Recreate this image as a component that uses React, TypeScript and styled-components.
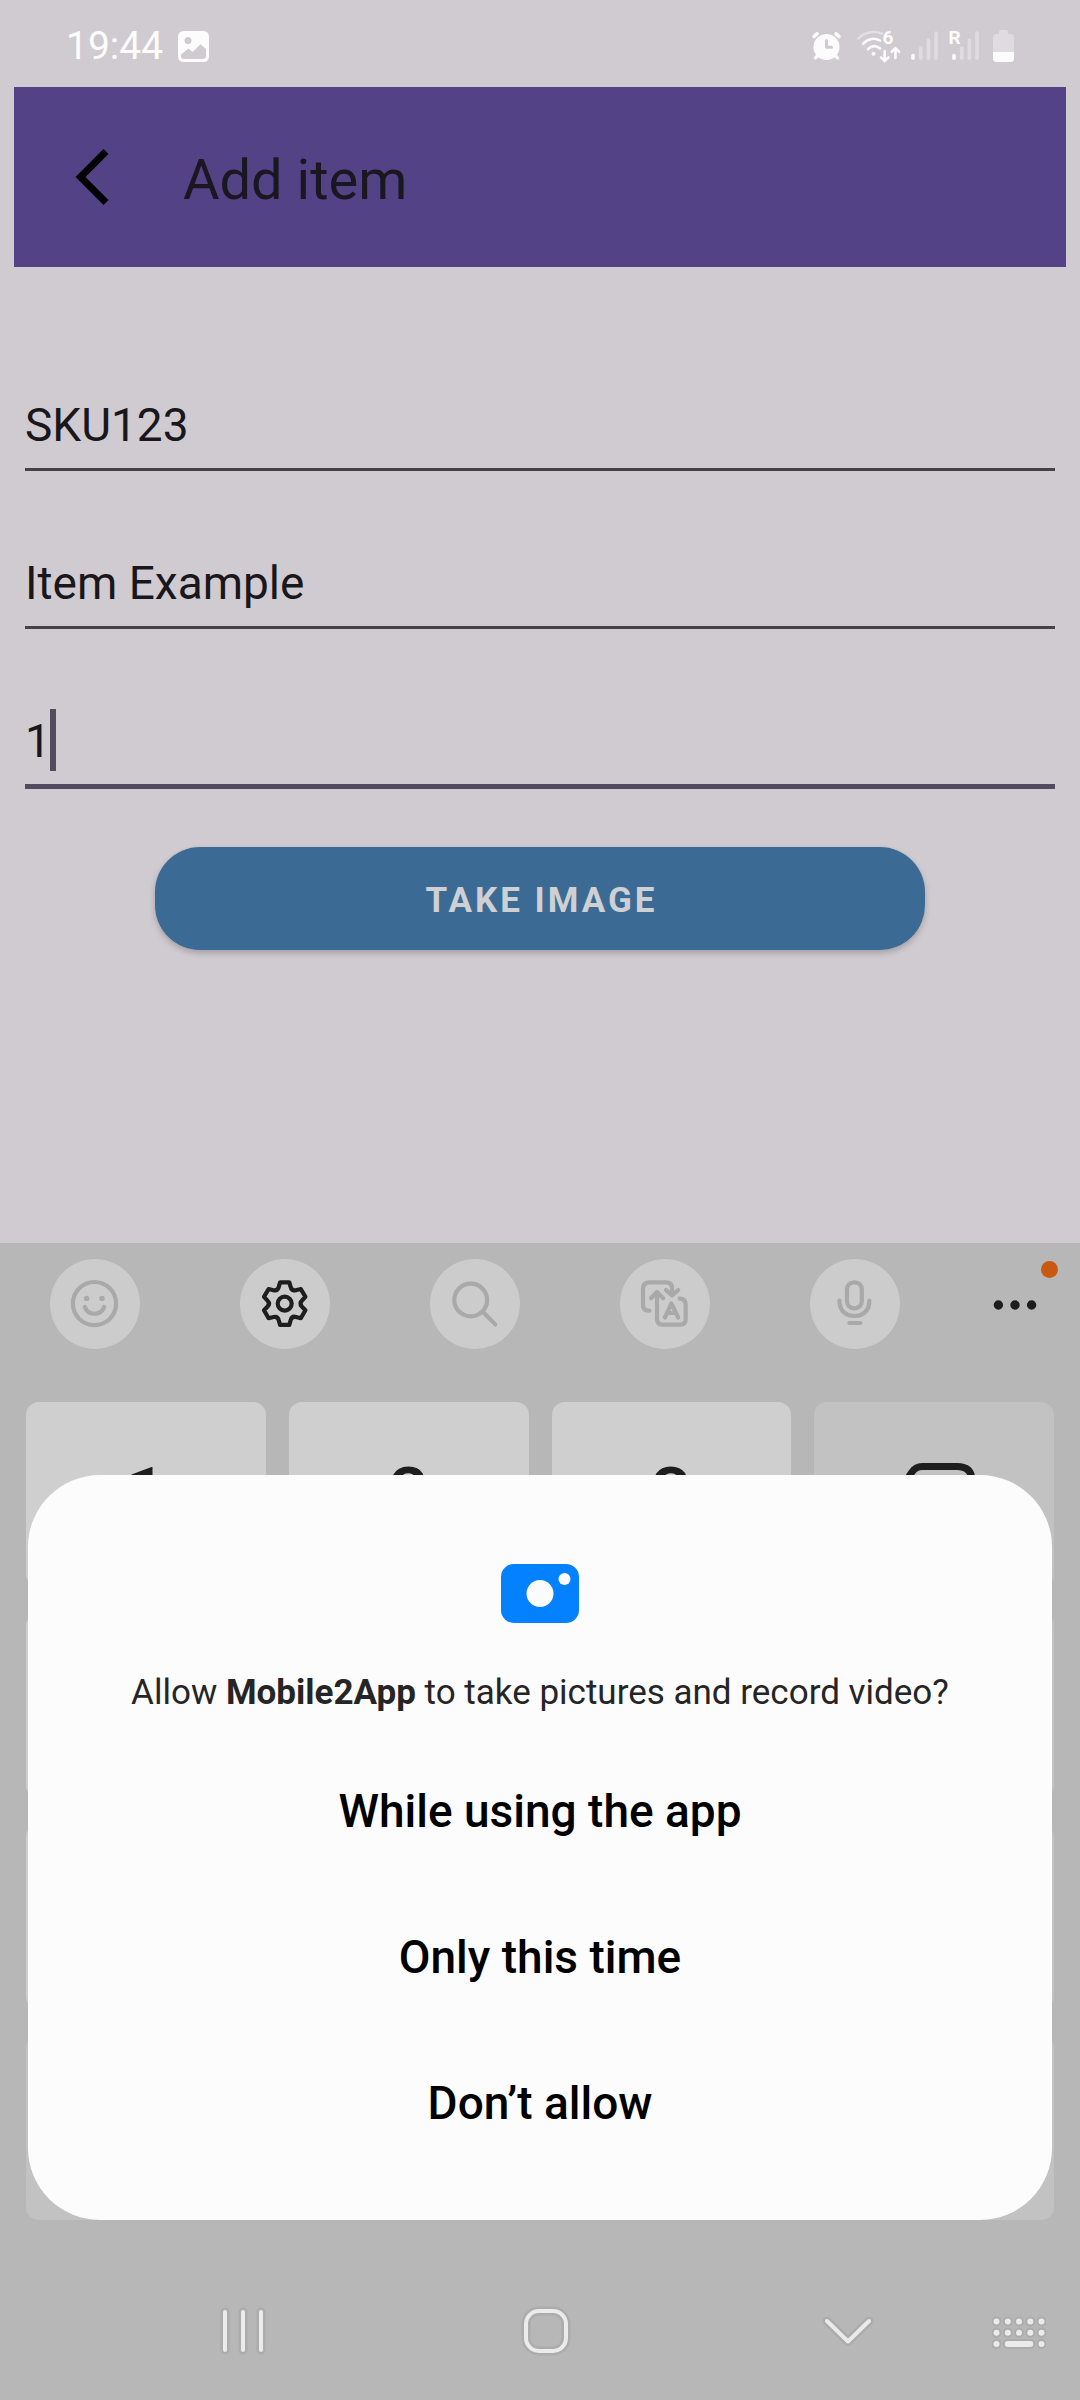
import React from "react";
import styled, { createGlobalStyle, css } from "styled-components";

const GlobalStyle = createGlobalStyle`
  *, *::before, *::after { box-sizing: border-box; }
  body { margin: 0; background: #d0cbd1; font-family: Roboto, "Liberation Sans", sans-serif; }
  button, input { font: inherit; color: inherit; border: 0; padding: 0; margin: 0; background: none; outline: none; }
  svg { display: block; flex: none; }
`;

const Screen = styled.div`
  position: relative;
  display: flex;
  flex-direction: column;
  min-height: 100vh;
  background: #d0cbd1;
`;

/* ---------- status bar ---------- */

const StatusBar = styled.div`
  display: flex;
  align-items: center;
  justify-content: space-between;
  height: 87px;
  padding: 5px 65px 0 66px;
  color: #fcfcfc;
`;

const StatusGroup = styled.div<{ $gap: number }>`
  display: flex;
  align-items: center;
  gap: ${(p) => p.$gap}px;
`;

const Clock = styled.time`
  font-size: 39px;
  line-height: 48px;
`;

const StatusLetter = styled.text`
  font-family: Roboto, sans-serif;
  font-weight: 700;
  font-size: 19px;
  fill: #fcfcfc;
`;

/* ---------- app page ---------- */

const AppBar = styled.header`
  display: flex;
  align-items: center;
  gap: 55px;
  height: 180px;
  margin: 0 14px;
  padding-left: 42px;
  background: #534285;
`;

const BackButton = styled.button`
  display: grid;
  place-items: center;
  width: 72px;
  height: 72px;
`;

const Title = styled.h1`
  margin: 0;
  padding-top: 5px;
  font-size: 56px;
  line-height: 68px;
  font-weight: 400;
  color: #1a1720;
`;

const Form = styled.form`
  display: flex;
  flex: 1;
  flex-direction: column;
  padding: 46px 25px 0;
`;

const Field = styled.div<{ $active?: boolean }>`
  display: flex;
  margin-top: 80px;
  padding-bottom: 13px;
  border-bottom: ${(p) => (p.$active ? "5px solid #514c5f" : "3px solid #454148")};
`;

const TextInput = styled.input<{ $fit?: boolean }>`
  height: 62px;
  padding-top: 2px;
  font-size: 46px;
  line-height: 60px;
  color: #19171c;
  ${(p) =>
    p.$fit
      ? css`
          width: 25px;
          caret-color: transparent;
        `
      : css`
          flex: 1;
          min-width: 0;
        `}
`;

const Caret = styled.span`
  width: 6px;
  height: 62px;
  background: #514c5f;
`;

const PrimaryButton = styled.button`
  align-self: center;
  width: 100%;
  max-width: 770px;
  height: 103px;
  margin-top: 58px;
  padding: 3px 0 0 3px;
  border-radius: 45px;
  background: #3b6b94;
  box-shadow: 0 3px 6px rgba(0, 0, 0, 0.22);
  color: #cfd0d3;
  font-size: 35px;
  font-weight: 700;
  letter-spacing: 3px;
  text-transform: uppercase;
`;

/* ---------- keyboard ---------- */

const Keyboard = styled.section`
  padding: 16px 0 42px;
  background: #b7b7b7;
`;

const Toolbar = styled.div`
  display: flex;
  gap: 70px;
  padding: 0 20px 0 50px;
`;

const Tools = styled.div`
  display: flex;
  flex: 1;
  justify-content: space-between;
`;

const ToolButton = styled.button<{ $on?: boolean }>`
  width: 90px;
  height: 90px;
  border-radius: 50%;
  background: #cccccc;
  color: ${(p) => (p.$on ? "#1e1e1e" : "#a9a9a9")};
`;

const MoreButton = styled.button`
  position: relative;
  width: 90px;
  height: 90px;
  color: #1e1e1e;
`;

const Badge = styled.span`
  position: absolute;
  top: 2px;
  right: 2px;
  width: 17px;
  height: 17px;
  border-radius: 50%;
  background: #c9590f;
`;

const Keys = styled.div`
  display: grid;
  grid-template-columns: repeat(4, 1fr);
  grid-auto-rows: 185px;
  gap: 26px 23px;
  padding: 53px 26px 0;
`;

const Key = styled.button<{ $dark?: boolean }>`
  display: grid;
  place-items: center;
  border-radius: 13px;
  background: ${(p) => (p.$dark ? "#c2c2c2" : "#cfcfcf")};
  color: #1e1e1e;
  font-size: 72px;
  font-weight: 500;
  line-height: 86px;
`;

const NavBar = styled.nav`
  display: flex;
  align-items: center;
  gap: 117px;
  height: 138px;
  padding: 0 34px 0 216px;
  background: #b7b7b7;
`;

const NavGroup = styled.div`
  display: flex;
  flex: 1;
  justify-content: space-between;
`;

const NavButton = styled.button`
  width: 54px;
  height: 54px;
`;

/* ---------- permission sheet ---------- */

const Sheet = styled.div`
  position: absolute;
  right: 28px;
  bottom: 180px;
  left: 28px;
  display: flex;
  flex-direction: column;
  align-items: center;
  padding: 89px 40px 44px;
  border-radius: 72px;
  background: #fcfcfc;
`;

const Message = styled.p`
  margin: 49px 0 24px;
  font-size: 35px;
  line-height: 42px;
  text-align: center;
  color: #252525;
`;

const Option = styled.button`
  width: 100%;
  height: 146px;
  font-size: 46px;
  line-height: 56px;
  font-weight: 500;
  color: #000000;
`;

/* ---------- drawings ---------- */

const PictureIcon = () => (
  <svg width="31" height="31" viewBox="0 0 31 31">
    <path
      fillRule="evenodd"
      fill="#fcfcfc"
      d="M6 0H25Q31 0 31 6V25Q31 31 25 31H6Q0 31 0 25V6Q0 0 6 0ZM10 6a3.6 3.6 0 1 0 .01 0ZM3 23.5V25Q3 28 6 28H25Q28 28 28 25V18L22.5 13.2L14.5 21L10.5 17.5Z"
    />
  </svg>
);

const AlarmIcon = () => (
  <svg width="36" height="33" viewBox="811 30 36 33" fill="none" stroke="#fcfcfc" strokeLinecap="round">
    <path d="M814 36.5L817 33.8M839 36.5L836 33.8" strokeWidth="3.6" />
    <path d="M818 55L815.5 58M835 55L837.5 58" strokeWidth="3.4" />
    <circle cx="826.5" cy="47" r="13" fill="#fcfcfc" stroke="none" />
    <path d="M826.5 40.5V47.3H831.5" stroke="#d0cbd1" strokeWidth="3" strokeLinejoin="round" />
  </svg>
);

const WifiIcon = () => (
  <svg width="44" height="45" viewBox="857 24 44 45" fill="none" stroke="#fcfcfc" strokeWidth="2.6" strokeLinecap="round">
    <path d="M858.5 38.5C864 32 874 30.5 882 33.5" stroke="#e3dfe4" />
    <path d="M863 43.8C868 38.2 875 37.6 880 40.5" />
    <path d="M868 49.2C871.5 45.2 876.5 45.2 880 48.5" />
    <circle cx="873.5" cy="53.8" r="2" fill="#fcfcfc" stroke="none" />
    <path d="M884.7 51V60.5M881 57.4L884.7 61L888.4 57.4M895.4 58V48.5M891.7 51.8L895.4 48.2L899.1 51.8" />
    <StatusLetter x="882.5" y="44" stroke="none">6</StatusLetter>
  </svg>
);

const SignalBars = ({ x }: { x: number }) => (
  <g strokeWidth="3.6" strokeLinecap="round" stroke="#dfdbe0">
    <path d={`M${x} 55.5V58.3`} stroke="#fcfcfc" />
    <path d={`M${x + 7.7} 48V58.3M${x + 15.4} 40V58.3M${x + 23} 33V58.3`} />
  </g>
);

const SignalIcon = () => (
  <svg width="27" height="33" viewBox="910 30 27 33">
    <SignalBars x={912} />
  </svg>
);

const RoamingIcon = () => (
  <svg width="35" height="45" viewBox="947 24 35 45">
    <SignalBars x={953} />
    <path d="M947 30H960.5V46H947Z" fill="#d0cbd1" />
    <StatusLetter x="947.5" y="44">R</StatusLetter>
  </svg>
);

const BatteryIcon = () => (
  <svg width="22" height="33" viewBox="993 30 22 33">
    <path d="M1001 30H1006Q1008 30 1008 32V34H1010Q1014 34 1014 38V53H993V38Q993 34 997 34H999V32Q999 30 1001 30Z" fill="#dfdbe0" />
    <path d="M993 52H1014V58.5Q1014 62 1010.5 62H996.5Q993 62 993 58.5Z" fill="#fcfcfc" />
  </svg>
);

const BackIcon = () => (
  <svg width="34" height="57" viewBox="0 0 34 57" fill="none" stroke="#000" strokeWidth="7">
    <path d="M31 2.5L5.5 28L31 53.5" />
  </svg>
);

const ToolIcon = ({ children }: { children: React.ReactNode }) => (
  <svg width="90" height="90" viewBox="0 0 90 90" fill="none" stroke="currentColor" strokeWidth="4.2" strokeLinecap="round" strokeLinejoin="round">
    {children}
  </svg>
);

const turn = (x: number, y: number, step: number) => {
  const a = (step * Math.PI) / 3;
  const rx = x * Math.cos(a) - y * Math.sin(a);
  const ry = x * Math.sin(a) + y * Math.cos(a);
  return `${(rx + 44.7).toFixed(1)} ${(ry + 44.6).toFixed(1)}`;
};

const gearPath =
  [0, 1, 2, 3, 4, 5]
    .map(
      (k) =>
        `${k ? "L" : "M"}${turn(-4.6, -21.3, k)}L${turn(4.6, -21.3, k)}L${turn(6, -16.5, k)}Q${turn(7, -12.4, k)} ${turn(11.2, -13.4, k)}`
    )
    .join("") + "Z";

const BackspaceIcon = () => (
  <svg width="84" height="64" viewBox="-6 0 84 64" fill="none" stroke="currentColor" strokeWidth="7" strokeLinecap="round" strokeLinejoin="round">
    <path d="M24 3.5H59Q74 3.5 74 18V46Q74 60.500 59 60.500H24Q18 60.500 14 55L2 37Q-1 32 2 27L14 9Q18 3.500 24 3.500Z" />
    <path d="M34 23L52 41M52 23L34 41" />
  </svg>
);

const CameraIcon = () => (
  <svg width="78" height="59" viewBox="0 0 78 59">
    <rect width="78" height="59" rx="13" fill="#0381fe" />
    <circle cx="39" cy="29.5" r="13.500" fill="#fcfcfc" />
    <circle cx="63.500" cy="15" r="6" fill="#fcfcfc" />
  </svg>
);

/* Each navigation glyph is drawn twice: a wide grey halo, then the light stroke. */
const NavIcon = ({ children }: { children: React.ReactNode }) => (
  <svg width="54" height="54" viewBox="0 0 54 54" fill="none" strokeLinecap="round" strokeLinejoin="round">
    <g stroke="#acacac" strokeWidth="9">{children}</g>
    <g stroke="#ebebeb" strokeWidth="4">{children}</g>
  </svg>
);

const KeyboardDots = () => {
  const dots = [4.5, 15.8, 27, 38.3, 49.5];
  const marks = [17.5, 28.8].flatMap((y) => dots.map((x) => `M${x} ${y}h.01`)).join("") + "M4.5 40h.01M49.5 40h.01M15.8 40H38.3";
  return (
    <svg width="54" height="54" viewBox="0 0 54 54" fill="none" strokeLinecap="round">
      <path d={marks} stroke="#acacac" strokeWidth="10" />
      <path d={marks} stroke="#ebebeb" strokeWidth="6" />
    </svg>
  );
};

const coveredKeys = [
  { name: "4" }, { name: "5" }, { name: "6" }, { name: "Done", dark: true },
  { name: "7" }, { name: "8" }, { name: "9" }, { name: "Point and dash", dark: true },
  { name: "Symbols", dark: true }, { name: "0" }, { name: "Space", dark: true }, { name: "Comma", dark: true },
];

export default function App() {
  return (
    <Screen>
      <GlobalStyle />
      <StatusBar>
        <StatusGroup $gap={15}>
          <Clock>19:44</Clock>
          <PictureIcon />
        </StatusGroup>
        <StatusGroup $gap={10}>
          <AlarmIcon />
          <WifiIcon />
          <SignalIcon />
          <RoamingIcon />
          <BatteryIcon />
        </StatusGroup>
      </StatusBar>

      <AppBar>
        <BackButton type="button" aria-label="Back">
          <BackIcon />
        </BackButton>
        <Title>Add item</Title>
      </AppBar>

      <Form onSubmit={(e) => e.preventDefault()}>
        <Field>
          <TextInput aria-label="SKU" defaultValue="SKU123" />
        </Field>
        <Field>
          <TextInput aria-label="Item name" defaultValue="Item Example" />
        </Field>
        <Field $active>
          <TextInput $fit aria-label="Quantity" inputMode="numeric" defaultValue="1" />
          <Caret />
        </Field>
        <PrimaryButton type="button">Take image</PrimaryButton>
      </Form>

      <Keyboard aria-label="Keyboard">
        <Toolbar>
          <Tools>
            <ToolButton type="button" aria-label="Emoji">
              <ToolIcon>
                <circle cx="44.5" cy="44.6" r="21.6" />
                <path d="M34.8 48C38 57 51 57 54.2 48" />
                <path d="M36.6 39.4h.01M52 39.4h.01" strokeWidth="5.4" />
              </ToolIcon>
            </ToolButton>
            <ToolButton type="button" $on aria-label="Settings">
              <ToolIcon>
                <path d={gearPath} />
                <circle cx="44.7" cy="44.6" r="7" />
              </ToolIcon>
            </ToolButton>
            <ToolButton type="button" aria-label="Search">
              <ToolIcon>
                <circle cx="40.7" cy="41" r="16.4" />
                <path d="M53 53L65.2 65.4" />
              </ToolIcon>
            </ToolButton>
            <ToolButton type="button" aria-label="Translate">
              <ToolIcon>
                <path d="M29.5 51.7H29Q23 51.7 23 46V30Q23 23.3 29.5 23.3H46Q52 23.3 52 29V36.5M46 31L52 36.5L58.2 31" />
                <path d="M59.5 39.7Q65.7 39.7 65.7 46V60Q65.7 65.7 60 65.7H43Q37 65.7 37 60V33M31 39.3L37 33L43.2 39.3" />
                <path d="M44.9 58.5L51.4 44.5L58.2 58.5M47.5 54H55.5" />
              </ToolIcon>
            </ToolButton>
            <ToolButton type="button" aria-label="Voice input">
              <ToolIcon>
                <rect x="37" y="23.3" width="14.8" height="26" rx="7" />
                <path d="M29.4 41.5C29.4 51 35 57 44.4 57S59.4 51 59.4 41.5M39.4 64H50.4" />
              </ToolIcon>
            </ToolButton>
          </Tools>
          <MoreButton type="button" aria-label="More">
            <ToolIcon>
              <path d="M28.4 46h.01M45 46h.01M61.6 46h.01" strokeWidth="9.4" />
            </ToolIcon>
            <Badge />
          </MoreButton>
        </Toolbar>
        <Keys>
          <Key type="button">1</Key>
          <Key type="button">2</Key>
          <Key type="button">3</Key>
          <Key type="button" $dark aria-label="Backspace">
            <BackspaceIcon />
          </Key>
          {coveredKeys.map((k) => (
            <Key key={k.name} type="button" tabIndex={-1} $dark={k.dark} aria-label={k.name} />
          ))}
        </Keys>
      </Keyboard>

      <NavBar>
        <NavGroup>
          <NavButton type="button" aria-label="Recent apps">
            <NavIcon>
              <path d="M9 8V46M27 8V46M45 8V46" />
            </NavIcon>
          </NavButton>
          <NavButton type="button" aria-label="Home">
            <NavIcon>
              <rect x="7" y="7" width="40" height="40" rx="13" />
            </NavIcon>
          </NavButton>
          <NavButton type="button" aria-label="Hide keyboard">
            <NavIcon>
              <path d="M6 17L27 37.5L48 17" />
            </NavIcon>
          </NavButton>
        </NavGroup>
        <NavButton type="button" aria-label="Choose keyboard">
          <KeyboardDots />
        </NavButton>
      </NavBar>

      <Sheet role="dialog" aria-label="Camera permission">
        <CameraIcon />
        <Message>
          Allow <b>Mobile2App</b> to take pictures and record video?
        </Message>
        <Option type="button">While using the app</Option>
        <Option type="button">Only this time</Option>
        <Option type="button">Don’t allow</Option>
      </Sheet>
    </Screen>
  );
}
